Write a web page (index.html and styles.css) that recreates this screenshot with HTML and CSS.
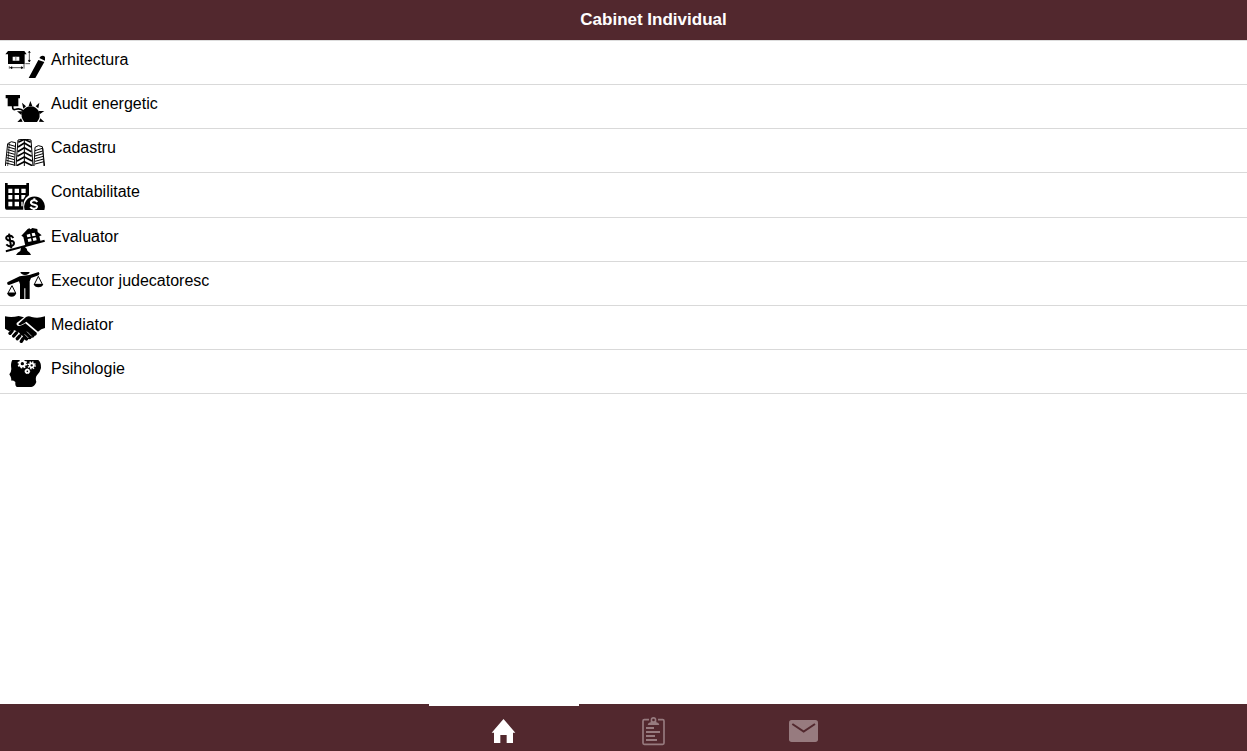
FILE: index.html
```html
<!DOCTYPE html>
<html lang="ro">
<head>
<meta charset="utf-8">
<meta name="viewport" content="width=device-width, initial-scale=1">
<title>Cabinet Individual</title>
<link rel="stylesheet" href="styles.css">
</head>
<body>
<header class="bar"><h1 class="title">Cabinet Individual</h1></header>
<main class="content">
<ul class="list">
<li class="row"><a class="link" href="#arhitectura">
<svg class="icon" viewBox="15 33 120 81" aria-hidden="true"><path d="M24 33H73L80 43H74V72H24V43H16ZM38 50V62H58V50Z" fill-rule="evenodd"/><path d="M46 50H49V62H46Z" fill="#777"/><path d="M31 83H69M31 83l5-3v6ZM69 83l-5-3v6ZM28 79v7M72 72V86M76 71H90M88 34V66M88 66l-3-5h6ZM88 34l-3 3h6Z" stroke="#000" stroke-width="2"/><path d="M115 60L133 66L106 114H86ZM118 54Q123 45 132 48Q138 53 135 62Z"/></svg>
<span>Arhitectura</span></a></li>
<li class="row"><a class="link" href="#audit">
<svg class="icon" viewBox="15 33 120 81" aria-hidden="true"><path d="M17 33H60V43H55V67H23V43H17Z"/><path d="M38 66V70Q38 79 47 76Q60 71 72 82" fill="none" stroke="#000" stroke-width="5"/><path d="M73 114Q60 99 67 82Q77 67 92 67Q107 67 116 81Q124 99 111 114Z"/><path d="M91 51L97 66H86ZM66 56L78 67L70 74ZM118 56L115 73L107 67ZM133 81L119 91L116 81ZM133 114L117 113L121 103ZM51 82L67 82L64 93ZM52 114L63 103L68 113Z"/></svg>
<span>Audit energetic</span></a></li>
<li class="row"><a class="link" href="#cadastru">
<svg class="icon" viewBox="15 34 120 81" aria-hidden="true"><g fill="none" stroke="#000" stroke-width="3"><path d="M16 115L23 48Q33 38 47 45L43 115M48 115L54 37L73 34L93 37L99 115M102 115L105 59Q114 50 127 57L134 115"/><path stroke-width="2" d="M28 46L23 115M129 62L131 115"/><path stroke-width="5" d="M55 44L73 35L92 44M54 58L73 46L93 58M53 72L73 60L94 72M52 86L73 74L95 86M51 100L73 88L96 100M50 114L73 102L97 114"/><path stroke-width="3" d="M25 50L45 56M24 58L45 64M23 66L44 72M22 74L44 80M21 82L43 88M20 90L43 96M19 98L42 104M18 106L42 112M105 69L127 62M105 77L128 70M105 85L129 78M105 93L130 86M105 101L131 94M105 109L132 102"/><path stroke-width="3" d="M73 34V115"/></g></svg>
<span>Cadastru</span></a></li>
<li class="row"><a class="link" href="#contabilitate">
<svg class="icon" viewBox="15 36 120 81" aria-hidden="true"><path fill-rule="evenodd" d="M15 36H23V42H79V36H87V73Q77 79 72 91Q68 103 70 116H20Q15 116 15 110ZM25 53V66H37V53ZM44 53V66H57V53ZM64 53V66H77V53ZM25 72V85H37V72ZM44 72V85H57V72ZM64 72V85H70L76 75V72ZM25 92V106H37V92ZM44 92V106H57V92ZM64 92V106H68V92Z"/><path d="M74 117A31 31 0 1 1 133 117Z"/><path d="M112 93Q107 86 100 88Q92 90 93 96Q95 100 103 101Q112 103 111 108Q109 114 101 113Q94 112 91 107M103 82V90M101 112V118" fill="none" stroke="#fff" stroke-width="6"/></svg>
<span>Contabilitate</span></a></li>
<li class="row"><a class="link" href="#evaluator">
<svg class="icon" viewBox="15 36 120 81" aria-hidden="true"><path d="M17 103L133 71L135 77L18 109ZM48 117Q52 110 61 105Q62 93 71 93Q80 93 82 104Q91 110 93 117Z"/><path fill-rule="evenodd" d="M64 59L83 39L88 37L92 40L97 36L112 39L113 48L125 58L118 61L122 77L76 89L70 63ZM80 56L82 64L92 62L90 53ZM95 52L97 61L107 59L104 50ZM83 69L85 78L95 76L93 67ZM98 66L100 75L110 73L108 64Z"/><path d="M40 66Q34 56 26 59Q17 61 19 68Q22 73 31 74Q41 74 42 81Q42 88 33 91Q25 92 19 85M27 53L34 97" fill="none" stroke="#000" stroke-width="6"/></svg>
<span>Evaluator</span></a></li>
<li class="row"><a class="link" href="#executor">
<svg class="icon" viewBox="15 36 120 81" aria-hidden="true"><path d="M61 36H89Q87 44 75 45Q63 44 61 36ZM22 67Q20 75 27 75L57 64L60 73V117H73V85H76V117H89V64L93 54L116 46Q121 41 116 36L88 45L59 49Z"/><path d="M36 77L24 99H47ZM115 49L103 73H127Z" fill="none" stroke="#000" stroke-width="3"/><path d="M21 99H49Q46 110 35 110Q24 110 21 99ZM101 72H130Q127 82 115 82Q104 82 101 72Z"/></svg>
<span>Executor judecatoresc</span></a></li>
<li class="row"><a class="link" href="#mediator">
<svg class="icon" viewBox="15 37 120 81" aria-hidden="true"><path d="M15 38Q35 43 56 37L72 41L50 58Q48 66 57 67Q66 67 76 59L110 87Q112 95 104 96Q102 103 95 102Q92 108 85 106Q82 114 75 109L69 103Q70 94 61 94Q60 84 51 86Q47 77 38 81Q32 78 28 83L15 75Z"/><path d="M55 61L78 40Q86 36 95 40Q114 45 135 38V73Q123 75 114 84L79 54Q65 65 57 64Z"/><g stroke="#000" stroke-width="10" stroke-linecap="round"><path d="M30 89L36 82M41 97L49 88M52 105L59 97M64 113L69 105"/></g><path d="M81 84L95 98M74 92L85 103" stroke="#fff" stroke-width="2"/></svg>
<span>Mediator</span></a></li>
<li class="row"><a class="link" href="#psihologie">
<svg class="icon" viewBox="15 37 120 81" aria-hidden="true"><path d="M37 37H115Q124 45 123 61Q120 75 111 83Q105 90 109 103Q104 117 94 118H51Q45 116 46 103Q40 98 34 99Q34 92 32 87L28 80Q34 72 34 64Q31 47 37 37Z"/><g fill="none" stroke="#fff"><circle cx="67" cy="48" r="8" stroke-width="6"/><circle cx="67" cy="48" r="12" stroke-width="5" stroke-dasharray="5 4.4"/><circle cx="95" cy="53" r="6" stroke-width="5"/><circle cx="95" cy="53" r="10" stroke-width="5" stroke-dasharray="4 3.9"/><circle cx="82" cy="71" r="5" stroke-width="5"/><circle cx="82" cy="71" r="7" stroke-width="3" stroke-dasharray="3 2.5"/></g></svg>
<span>Psihologie</span></a></li>
</ul>
</main>
<nav class="tabs">
<a class="tab active" href="#home" aria-label="Home"><svg class="tab-icon" viewBox="207 60 90 90"><path d="M250.500 69L286 110H279V141H260V117H241V141H222V110H215Z"/></svg></a>
<a class="tab" href="#list" aria-label="List"><svg class="tab-icon" viewBox="657 60 90 90"><path d="M687 71H673Q669 71 669 75V141Q669 145 673 145H728Q732 145 732 141V75Q732 71 728 71H714" fill="none" stroke="currentColor" stroke-width="5"/><path fill-rule="evenodd" d="M683 87Q684 80 692 79V71Q692 63 700.500 63Q709 63 709 71V79Q717 80 718 87ZM700.500 68A4 4 0 1 0 700.500 76A4 4 0 1 0 700.500 68Z"/><path d="M678 93H702V99H678ZM678 105H720V111H678ZM678 117H705V123H678ZM678 129H711V135H678Z"/></svg></a>
<a class="tab" href="#mail" aria-label="Mail"><svg class="tab-icon" viewBox="1107 60 90 90"><rect x="1107" y="72" width="87" height="66" rx="8"/><path d="M1117 84L1151 107L1185 84" class="flap"/></svg></a>
</nav>
</body>
</html>
```
FILE: styles.css
```css
* { box-sizing: border-box; }

body {
  margin: 0;
  min-height: 100vh;
  display: flex;
  flex-direction: column;
  background: #fff;
  color: #000;
  font: 16px/20px "Liberation Sans", Arial, sans-serif;
}

.bar {
  padding: 10px 0 10px 60px;
  background: #52282e;
  color: #fff;
  text-align: center;
}

.title {
  margin: 0;
  font-size: 17px;
  line-height: 20px;
  font-weight: 700;
}

.content { flex: 1; }

.list {
  margin: 0;
  padding: 0;
  list-style: none;
  display: grid;
  grid-auto-rows: 1fr;
  min-height: 354px;
  border-top: 1px solid #ddd;
}

.row { border-bottom: 1px solid #d9d9d9; }

.link {
  display: flex;
  gap: 6px;
  padding: 9px 5px 5px;
  color: inherit;
  text-decoration: none;
}

.icon {
  width: 40px;
  height: 27px;
  margin-top: 1px;
}

.tabs {
  display: flex;
  justify-content: center;
  padding-left: 60px;
  background: #52282e;
}

.tab {
  width: 150px;
  height: 47px;
  padding-top: 10px;
  border-top: 2px solid transparent;
  text-align: center;
  color: #977b7f;
}

.active {
  color: #fff;
  border-color: #fff;
}

.tab-icon {
  width: 30px;
  height: 30px;
  fill: currentColor;
}

.flap {
  fill: none;
  stroke: #52282e;
  stroke-width: 6;
}
```
